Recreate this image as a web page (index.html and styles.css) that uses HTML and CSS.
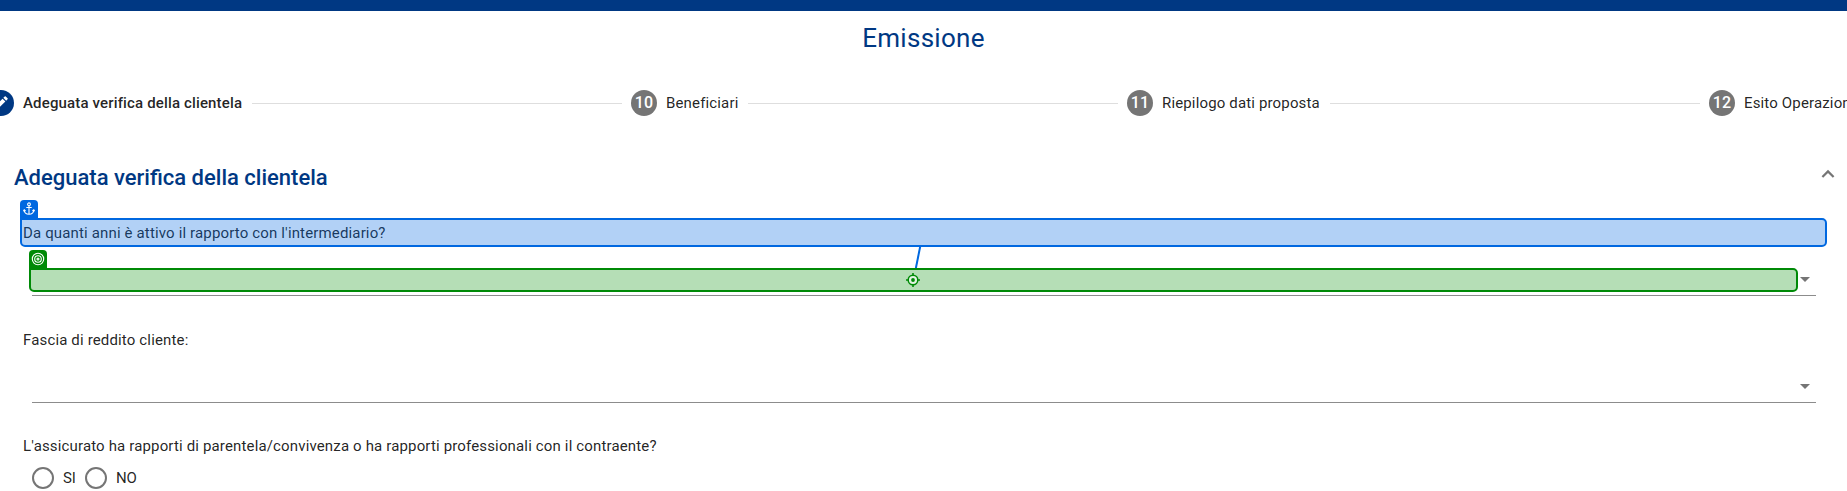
FILE: index.html
```
<!DOCTYPE html>
<html lang="it">
<head>
<meta charset="utf-8">
<title>Emissione</title>
<link rel="stylesheet" href="styles.css">
</head>
<body>
<div class="topbar"></div>
<h1 class="title"><span>Emissione</span></h1>
<nav class="stepper">
  <div class="step active">
    <span class="badge"><svg width="18" height="18" viewBox="0 0 24 24"><path fill="#fff" d="M3 17.25V21h3.75L17.81 9.94l-3.75-3.75L3 17.25zM20.71 7.04a1 1 0 0 0 0-1.41l-2.34-2.34a1 1 0 0 0-1.41 0l-1.83 1.83 3.75 3.75 1.83-1.83z"/></svg></span>
    <span class="step-label">Adeguata verifica della clientela</span>
  </div>
  <i class="rule"></i>
  <div class="step"><span class="badge">10</span><span class="step-label">Beneficiari</span></div>
  <i class="rule"></i>
  <div class="step"><span class="badge">11</span><span class="step-label">Riepilogo dati proposta</span></div>
  <i class="rule"></i>
  <div class="step last"><span class="badge">12</span><span class="step-label">Esito Operazione</span></div>
</nav>
<header class="panel-head">
  <h2><span>Adeguata verifica della clientela</span></h2>
  <svg class="chevron" width="14" height="10" viewBox="0 0 14 10"><path d="M1.4 8 7 2.4 12.6 8" fill="none" stroke="#757575" stroke-width="2.2"/></svg>
</header>
<main class="form">
  <section class="anchor-field">
    <span class="question q1">Da quanti anni è attivo il rapporto con l'intermediario?</span>
    <div class="overlay">
      <span class="tab"><svg width="12" height="14" viewBox="0 0 12 14" fill="none" stroke="#fff" stroke-width="1.1"><circle cx="6" cy="2.3" r="1.4"/><path d="M6 3.700V12.300M3.300 5.500h5.400M1.100 8C1.400 11 3.200 12.300 6 12.300S10.600 11 10.900 8M.3 9.300l.9-1.500 1.400 1.200M9.400 9l1.400-1.200.9 1.500"/></svg></span>
    </div>
    <svg class="connector" width="10" height="23" viewBox="0 0 10 23"><path d="M7.300 0 2.700 23" stroke="#0068e0" stroke-width="2"/></svg>
  </section>
  <section class="select target-field">
    <i class="arrow"></i>
    <div class="overlay green">
      <span class="tab"><svg width="14" height="14" viewBox="0 0 14 14" fill="none" stroke="#fff" stroke-width="1.1"><circle cx="7" cy="7" r="5.700"/><circle cx="7" cy="7" r="3.300"/><circle cx="7" cy="7" r="1"/></svg></span>
      <svg class="crosshair" width="14" height="14" viewBox="0 0 14 14"><circle cx="7" cy="7" r="4.800" fill="#e2f3e2" stroke="#008a07" stroke-width="1.500"/><circle cx="7" cy="7" r="1.900" fill="#008a07"/><path d="M7 0v2.500M7 11.500V14M0 7h2.500M11.500 7H14" stroke="#008a07" stroke-width="1.600"/></svg>
    </div>
  </section>
  <div class="question q2"><span>Fascia di reddito cliente:</span></div>
  <section class="select second"><i class="arrow"></i></section>
  <div class="question q3"><span>L'assicurato ha rapporti di parentela/convivenza o ha rapporti professionali con il contraente?</span></div>
  <div class="radios">
    <span class="radio"></span><span class="option">SI</span>
    <span class="radio"></span><span class="option">NO</span>
  </div>
</main>
</body>
</html>
```
FILE: styles.css
```
* { box-sizing: border-box; }
body {
  margin: 0;
  height: 491px;
  overflow: hidden;
  background: #fff;
  font: 15px/20px Roboto, "Liberation Sans", sans-serif;
  letter-spacing: 0.15px;
  color: rgba(0, 0, 0, 0.87);
}
h1, h2 { margin: 0; color: #003883; }
svg { display: block; }
.topbar { height: 11px; background: #003883; }
.title {
  height: 52px;
  padding-top: 11px;
  text-align: center;
  font-size: 26px;
  line-height: 32px;
  font-weight: 400;
  letter-spacing: 0.3px;
}
.stepper {
  display: flex;
  align-items: center;
  height: 80px;
  margin-left: -12px;
  width: 1900px;
}
.step { display: flex; align-items: center; gap: 9px; flex: none; width: 254px; }
.step:nth-of-type(2) { width: 107px; }
.step:nth-of-type(3) { width: 193px; }
.step.last { width: 180px; }
.step-label { white-space: nowrap; }
.active .step-label { font-weight: 500; }
.badge {
  display: flex;
  align-items: center;
  justify-content: center;
  flex: none;
  width: 26px;
  height: 26px;
  border-radius: 50%;
  background: #757575;
  color: #fff;
  font-size: 16px;
  font-weight: 500;
}
.active .badge { background: #003883; }
.rule { flex: none; width: 370px; height: 1px; margin: 1px 9px 0 10px; background: #dedede; }
.panel-head {
  display: flex;
  justify-content: space-between;
  height: 75px;
  padding: 20px 12px 0 14px;
}
h2 { padding-top: 1px; font-size: 22px; line-height: 28px; font-weight: 500; letter-spacing: 0; }
.chevron { margin-top: 6px; }
.form { padding: 0 20px; }
.anchor-field { position: relative; height: 29px; padding: 5px 0 0 3px; }
.overlay {
  position: absolute;
  inset: 0;
  border: 2px solid #0068e0;
  border-radius: 0 5px 5px 5px;
  background: rgba(0, 104, 224, 0.3);
}
.tab {
  position: absolute;
  left: -2px;
  top: -20px;
  display: flex;
  align-items: center;
  justify-content: center;
  width: 18px;
  height: 18px;
  border-radius: 4px 4px 0 0;
  background: #0068e0;
}
.connector { position: absolute; left: 893px; top: 28px; }
.select { position: relative; margin: 0 11px 0 12px; border-bottom: 1px solid #8c8c8c; }
.target-field { height: 28px; margin-top: 21px; }
.arrow {
  position: absolute;
  right: 6px;
  top: 9px;
  border: 5.5px solid transparent;
  border-top: 5px solid #757575;
  border-bottom: 0;
}
.green { inset: 0 18px auto -3px; height: 24px; border-color: #008a07; background: #b5deb6; }
.green .tab { background: #008a07; }
.crosshair { position: absolute; left: 875px; top: 3px; }
.question { white-space: nowrap; }
.q1 { display: block; }
.q2 { height: 47px; padding: 34px 0 0 3px; }
.second { height: 32px; margin-top: 28px; }
.second .arrow { top: 13px; }
.q3 { height: 64px; padding: 33px 0 0 3px; }
.radios { display: flex; align-items: center; height: 22px; padding-left: 12px; }
.radio { width: 22px; height: 22px; border: 2px solid #757575; border-radius: 50%; }
.option { width: 31px; padding-left: 9px; letter-spacing: -0.2px; }
```
